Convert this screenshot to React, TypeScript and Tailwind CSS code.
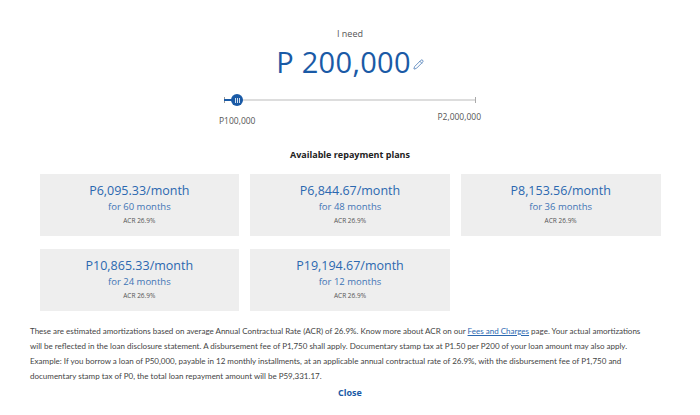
import { Pencil } from "lucide-react";

const plans = [
    { amount: "P6,095.33", months: 60 },
    { amount: "P6,844.67", months: 48 },
    { amount: "P8,153.56", months: 36 },
    { amount: "P10,865.33", months: 24 },
    { amount: "P19,194.67", months: 12 },
];

const PlanCard = ({ amount, months }: { amount: string; months: number }) => (
    <div className="h-[62px] bg-[#eeeeee] flex flex-col items-center justify-center">
        <div className="text-[12.5px] leading-[16px] text-[#2b68b0]">{amount}/month</div>
        <div className="text-[9.5px] leading-[14px] text-[#3f74b5] mt-[1px]">for {months} months</div>
        <div className="text-[6.5px] leading-[10px] text-[#555555] mt-[2px]">ACR 26.9%</div>
    </div>
);

export default function App() {
    return (
        <div className="w-[700px] h-[415px] bg-white flex flex-col items-center font-['Open_Sans',sans-serif] overflow-hidden">
            {/* Amount */}
            <div className="mt-[28px] text-[9px] leading-[12px] text-[#555555]">I need</div>
            <div className="mt-[2px] flex items-end">
                <span className="text-[29px] leading-[40px] text-[#1a5aa6] tracking-[0.3px]">P 200,000</span>
                <Pencil className="w-[11px] h-[11px] text-[#3a6fb0] ml-[2px] mb-[12px]" strokeWidth={1.6} />
            </div>

            {/* Slider */}
            <div className="mt-[11px] w-[262px] flex flex-col">
                <div className="relative h-[14px] mx-[5px]">
                    <div className="absolute left-0 right-0 top-[6px] h-[2px] bg-[#dddddd]" />
                    <div className="absolute left-0 top-[4px] w-[1px] h-[6px] bg-[#999999]" />
                    <div className="absolute right-0 top-[4px] w-[1px] h-[6px] bg-[#aaaaaa]" />
                    <div className="absolute left-0 w-[13px] top-[6px] h-[2px] bg-[#1a5aa6]" />
                    <div className="absolute left-[7px] top-[1px] w-[12px] h-[12px] rounded-full bg-[#1a5aa6] flex items-center justify-center gap-[1px]">
                        <span className="w-[1px] h-[5px] bg-white/80" />
                        <span className="w-[1px] h-[5px] bg-white/80" />
                        <span className="w-[1px] h-[5px] bg-white/80" />
                    </div>
                </div>
                <div className="flex items-start justify-between text-[8.5px] text-[#555555]">
                    <span className="mt-[8px]">P100,000</span>
                    <span className="mt-[4px]">P2,000,000</span>
                </div>
            </div>

            {/* Plans */}
            <div className="mt-[21px] text-[9px] leading-[12px] font-bold text-[#222222]">Available repayment plans</div>
            <div className="mt-[13px] w-[621px] grid grid-cols-3 gap-x-[11px] gap-y-[13px]">
                {plans.map((p) => (
                    <PlanCard key={p.months} amount={p.amount} months={p.months} />
                ))}
            </div>

            {/* Disclaimer */}
            <p className="mt-[13px] w-[640px] font-['Lato',sans-serif] text-[8px] leading-[15px] text-[#444444]">
                These are estimated amortizations based on average Annual Contractual Rate (ACR) of 26.9%. Know more about ACR on our{" "}
                <span className="text-[#2b68b0] underline">Fees and Charges</span> page. Your actual amortizations
                <br />
                will be reflected in the loan disclosure statement. A disbursement fee of P1,750 shall apply. Documentary stamp tax at P1.50 per P200 of your loan amount may also apply.
                <br />
                Example: If you borrow a loan of P50,000, payable in 12 monthly installments, at an applicable annual contractual rate of 26.9%, with the disbursement fee of P1,750 and
                <br />
                documentary stamp tax of P0, the total loan repayment amount will be P59,331.17.
            </p>
            <button className="mt-[3px] text-[9px] leading-[12px] font-bold text-[#1a5aa6]">Close</button>
        </div>
    );
}
